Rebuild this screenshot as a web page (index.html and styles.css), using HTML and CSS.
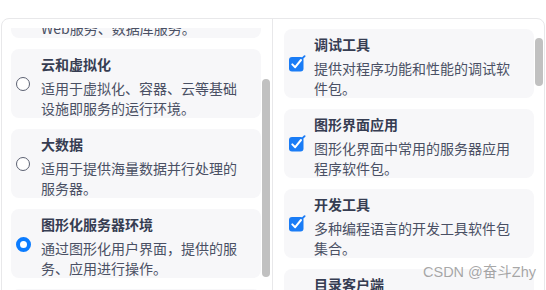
FILE: index.html
```html
<!DOCTYPE html>
<html lang="zh-CN">
<head>
<meta charset="utf-8">
<title>软件选择</title>
<link rel="stylesheet" href="styles.css">
</head>
<body>
<div class="panel">
  <div class="col col-left">
    <div class="scroller" id="envs">
      <div class="list">
        <div class="card">
          <span class="radio"></span>
          <div class="text">
            <div class="title">服务器</div>
            <div class="desc">适用于提供文件共享、邮件、Web服务、数据库服务。</div>
          </div>
        </div>
        <div class="card">
          <span class="radio"></span>
          <div class="text">
            <div class="title">云和虚拟化</div>
            <div class="desc">适用于虚拟化、容器、云等基础设施即服务的运行环境。</div>
          </div>
        </div>
        <div class="card">
          <span class="radio"></span>
          <div class="text">
            <div class="title">大数据</div>
            <div class="desc">适用于提供海量数据并行处理的服务器。</div>
          </div>
        </div>
        <div class="card">
          <span class="radio checked"></span>
          <div class="text">
            <div class="title">图形化服务器环境</div>
            <div class="desc">通过图形化用户界面，提供的服务、应用进行操作。</div>
          </div>
        </div>
        <div class="card">
          <span class="radio"></span>
          <div class="text">
            <div class="title">最小安装</div>
            <div class="desc">基本功能，仅包含最少的软件包。</div>
          </div>
        </div>
      </div>
    </div>
    <div class="thumb thumb-left"></div>
  </div>
  <div class="col col-right">
    <div class="scroller">
      <div class="list">
        <div class="card">
          <svg class="check" viewBox="0 0 17 17" width="17" height="17"><rect x="0" y="2" width="14.5" height="14.5" rx="3" fill="#1a7cf6"/><path d="M3.3 9.4 L6.2 12.2 L12 5" fill="none" stroke="#fff" stroke-width="2" stroke-linecap="round" stroke-linejoin="round"/><path d="M13.6 3.2 L15.6 1.2" stroke="#1a7cf6" stroke-width="1.8" stroke-linecap="round"/></svg>
          <div class="text">
            <div class="title">调试工具</div>
            <div class="desc">提供对程序功能和性能的调试软件包。</div>
          </div>
        </div>
        <div class="card">
          <svg class="check" viewBox="0 0 17 17" width="17" height="17"><rect x="0" y="2" width="14.5" height="14.5" rx="3" fill="#1a7cf6"/><path d="M3.3 9.4 L6.2 12.2 L12 5" fill="none" stroke="#fff" stroke-width="2" stroke-linecap="round" stroke-linejoin="round"/><path d="M13.6 3.2 L15.6 1.2" stroke="#1a7cf6" stroke-width="1.8" stroke-linecap="round"/></svg>
          <div class="text">
            <div class="title">图形界面应用</div>
            <div class="desc">图形化界面中常用的服务器应用程序软件包。</div>
          </div>
        </div>
        <div class="card">
          <svg class="check" viewBox="0 0 17 17" width="17" height="17"><rect x="0" y="2" width="14.5" height="14.5" rx="3" fill="#1a7cf6"/><path d="M3.3 9.4 L6.2 12.2 L12 5" fill="none" stroke="#fff" stroke-width="2" stroke-linecap="round" stroke-linejoin="round"/><path d="M13.6 3.2 L15.6 1.2" stroke="#1a7cf6" stroke-width="1.8" stroke-linecap="round"/></svg>
          <div class="text">
            <div class="title">开发工具</div>
            <div class="desc">多种编程语言的开发工具软件包集合。</div>
          </div>
        </div>
        <div class="card">
          <span class="box"></span>
          <div class="text">
            <div class="title">目录客户端</div>
            <div class="desc">用于集成到使用目录服务管理的网络中。</div>
          </div>
        </div>
      </div>
    </div>
    <div class="thumb thumb-right"></div>
  </div>
</div>
<div class="watermark">CSDN @奋斗Zhy</div>
<script src="script.js"></script>
</body>
</html>
```
FILE: styles.css
```css
html, body {
  margin: 0;
  padding: 0;
  background: #ffffff;
}
body {
  height: 290px;
  overflow: hidden;
  position: relative;
  font-family: "Noto Sans CJK SC", "Noto Sans", sans-serif;
}
.panel {
  margin: 18px 0 0 1px;
  width: 542px;
  height: 290px;
  border: 1px solid #e8e8ea;
  border-radius: 8px;
  display: grid;
  grid-template-columns: 270px 272px;
}
.col {
  position: relative;
  padding-top: 9px;
  box-sizing: border-box;
  height: 288px;
}
.col-right {
  border-left: 1px solid #e8e8ea;
}
.scroller {
  height: 279px;
  overflow: hidden;
}
.col-left .scroller {
  padding-left: 9px;
}
.col-right .scroller {
  padding-left: 11px;
}
.list {
  padding-top: 1px;
  display: flex;
  flex-direction: column;
  gap: 11px;
}
.card {
  width: 250px;
  box-sizing: border-box;
  background: #f7f7f9;
  border-radius: 8px;
  padding: 5px 0 0 5px;
  height: 69px;
  display: flex;
  align-items: center;
  gap: 11px;
}
.text {
  width: 200px;
  align-self: flex-start;
}
.title {
  font-size: 14px;
  line-height: 20px;
  font-weight: 700;
  color: #363d52;
  margin-bottom: 4px;
}
.desc {
  font-size: 14px;
  line-height: 20px;
  color: #4a5064;
}
.radio {
  flex: none;
  width: 14px;
  height: 14px;
  box-sizing: border-box;
  border: 1.3px solid #5c6172;
  border-radius: 50%;
  background: #fff;
  margin-top: -4px;
}
.radio.checked {
  width: 15px;
  height: 15px;
  border: 4px solid #0b7cff;
  margin-left: -0.5px;
  margin-right: -0.5px;
}
.check {
  flex: none;
  width: 17px;
  height: 17px;
  margin-top: -6px;
  margin-right: -3px;
}
.box {
  flex: none;
  width: 14px;
  height: 14px;
  box-sizing: border-box;
  border: 1.3px solid #5c6172;
  border-radius: 3px;
  background: #fff;
}
.thumb {
  position: absolute;
  width: 8px;
  border-radius: 4px;
  background: #c1c1c1;
}
.thumb-left {
  right: 2px;
  top: 60px;
  height: 198px;
}
.thumb-right {
  right: 1px;
  top: 19px;
  height: 48px;
}
.watermark {
  position: absolute;
  left: 423px;
  top: 263px;
  font-family: "Liberation Sans", "Noto Sans CJK SC", sans-serif;
  font-size: 14.5px;
  line-height: 18px;
  color: rgba(110, 110, 110, 0.6);
  white-space: nowrap;
}
```
FILE: script.js
```js
document.getElementById('envs').scrollTop = 60;
```
